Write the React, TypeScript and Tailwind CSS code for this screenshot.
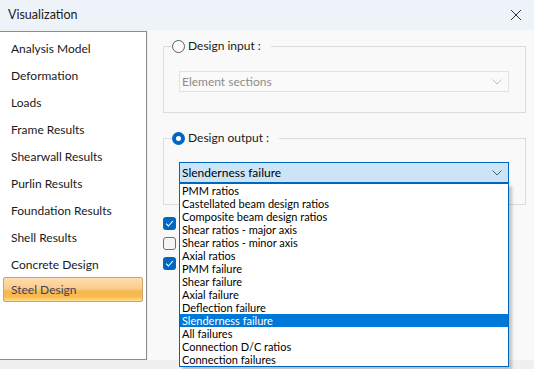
import React from "react";

const sideItems = [
  "Analysis Model",
  "Deformation",
  "Loads",
  "Frame Results",
  "Shearwall Results",
  "Purlin Results",
  "Foundation Results",
  "Shell Results",
  "Concrete Design",
  "Steel Design",
];

const listItems = [
  "PMM ratios",
  "Castellated beam design ratios",
  "Composite beam design ratios",
  "Shear ratios - major axis",
  "Shear ratios - minor axis",
  "Axial ratios",
  "PMM failure",
  "Shear failure",
  "Axial failure",
  "Deflection failure",
  "Slenderness failure",
  "All failures",
  "Connection D/C ratios",
  "Connection failures",
];

function Chevron({ color }: { color: string }) {
  return (
    <svg width="10" height="6" viewBox="0 0 10 6" className="shrink-0">
      <path d="M0.5 0.5 L5 5 L9.5 0.5" fill="none" stroke={color} strokeWidth="1" />
    </svg>
  );
}

function Check() {
  return (
    <svg width="9" height="7" viewBox="0 0 9 7">
      <path d="M1 3.6 L3.4 6 L8 1" fill="none" stroke="white" strokeWidth="1.1" />
    </svg>
  );
}

export default function App() {
  return (
    <div
      className="w-[534px] h-[369px] bg-[#f0f0f0] flex flex-col overflow-hidden text-[12px]"
      style={{ fontFamily: 'Lato, "Noto Sans", sans-serif' }}
    >
      {/* Title bar */}
      <div className="h-[30px] shrink-0 bg-[#eef3f9] flex items-center justify-between pl-[8px] pr-[6px]">
        <span className="text-[#1b1b1b] text-[12.5px]">Visualization</span>
        <svg width="12" height="12" viewBox="0 0 12 12" className="mr-[6px]">
          <path d="M1 1 L11 11 M11 1 L1 11" stroke="#333" strokeWidth="1" fill="none" />
        </svg>
      </div>

      {/* Body */}
      <div className="flex flex-row h-[330px] shrink-0">
        {/* Sidebar */}
        <div className="w-[147px] h-[329px] mt-[1px] bg-white border-t border-r border-b border-[#8d8d8d] pt-[3px] flex flex-col">
          {sideItems.map((it) =>
            it === "Steel Design" ? (
              <div
                key={it}
                className="h-[25px] mt-[-1px] mx-[3px] px-[7px] flex items-center rounded-[2px] border border-[#caa56e] text-[#3f3f58] text-[12px]"
                style={{
                  background:
                    "linear-gradient(to bottom, #fddcb0 0%, #fbcd8c 45%, #f8b74e 58%, #f8bb4e 82%, #fde090 100%)",
                }}
              >
                {it}
              </div>
            ) : (
              <div key={it} className="h-[27px] px-[11px] flex items-center text-[#1a1a1a] text-[12px]">
                {it}
              </div>
            )
          )}
        </div>

        {/* Main panel */}
        <div className="flex-1 ml-[1px] bg-[#f9f9f9] pl-[15px] pr-[8px] pt-[8px] flex flex-col">
          {/* Design input */}
          <fieldset className="border border-[#dcdcdc] w-[363px] px-[15px] pt-[17px] pb-[20px]">
            <legend className="ml-[-7px] pr-[10px] flex items-center h-[16px]">
              <span className="w-[13px] h-[13px] rounded-full border border-[#5c5c5c] bg-[#fbfbfb] mr-[3px]" />
              <span className="text-[#1a1a1a] text-[12px]">Design input :</span>
            </legend>
            <div className="h-[21px] w-[330px] border border-[#e3e3e3] bg-[#fafafa] flex items-center justify-between pl-[2px] pr-[6px]">
              <span className="text-[#8c8c8c] text-[12px] mt-[1px]">Element sections</span>
              <Chevron color="#bdbdbd" />
            </div>
          </fieldset>

          {/* Design output */}
          <fieldset className="mt-[17px] border border-[#dcdcdc] w-[363px] px-[15px] pt-[16px] pb-[21px]">
            <legend className="ml-[-7px] pr-[10px] flex items-center h-[16px]">
              <span className="w-[13px] h-[13px] rounded-full bg-[#0067c0] mr-[3px] flex items-center justify-center">
                <span className="w-[5px] h-[5px] rounded-full bg-white" />
              </span>
              <span className="text-[#1a1a1a] text-[12px]">Design output :</span>
            </legend>
            <div className="relative h-[21px] w-[330px] border border-[#0067c0] bg-[#cce4f7] flex items-center justify-between pl-[2px] pr-[6px]">
              <span className="text-black text-[12px]">Slenderness failure</span>
              <Chevron color="#5a5a5a" />
              {/* Dropdown list */}
              <div className="absolute left-[-1px] top-[20px] w-[330px] bg-white border border-[#0067c0] shadow-[3px_3px_3px_rgba(0,0,0,0.22)] z-10 flex flex-col">
                {listItems.map((li) => (
                  <div
                    key={li}
                    className={
                      "h-[13px] leading-[13px] text-[11px] pl-[2px] whitespace-nowrap overflow-hidden " +
                      (li === "Slenderness failure" ? "bg-[#0078d7] text-white" : "text-black")
                    }
                  >
                    {li}
                  </div>
                ))}
              </div>
            </div>
          </fieldset>

          {/* Checkboxes */}
          <div className="mt-[12px] flex flex-col gap-[7px]">
            <span className="w-[13px] h-[13px] rounded-[3px] bg-[#0067c0] flex items-center justify-center">
              <Check />
            </span>
            <span className="w-[13px] h-[13px] rounded-[3px] border border-[#6f6f6f] bg-[#f5f5f5]" />
            <span className="w-[13px] h-[13px] rounded-[3px] bg-[#0067c0] flex items-center justify-center">
              <Check />
            </span>
          </div>
        </div>
      </div>
    </div>
  );
}
